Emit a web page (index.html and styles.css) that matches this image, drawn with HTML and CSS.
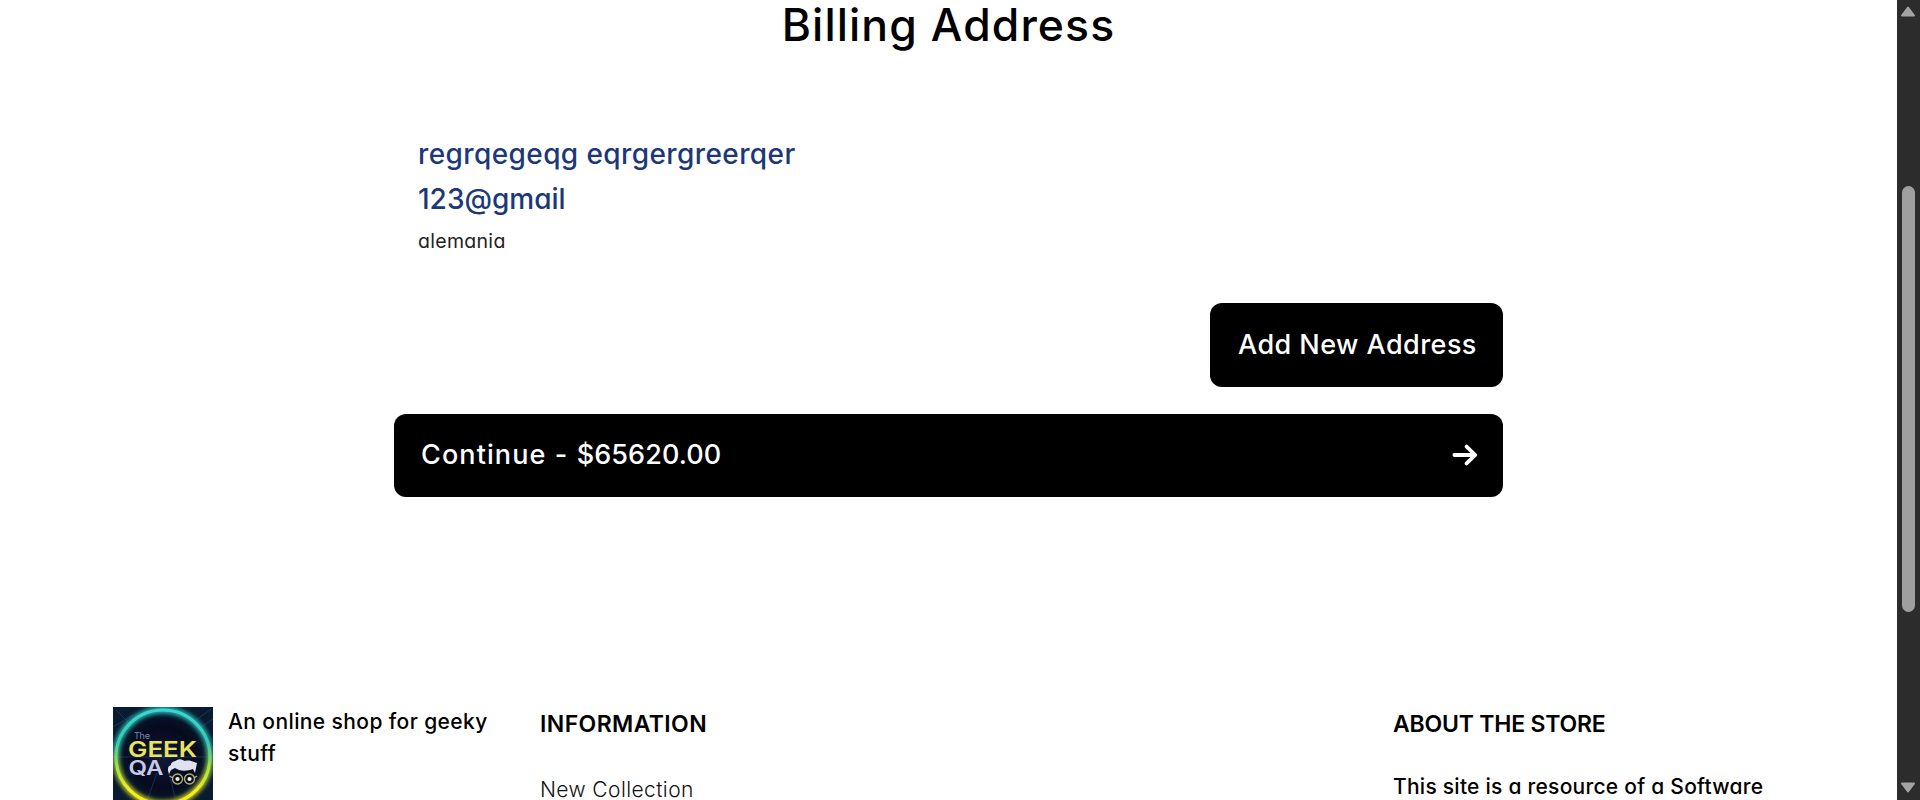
FILE: index.html
```
<!DOCTYPE html>
<html lang="en">
<head>
<meta charset="utf-8">
<title>Billing Address</title>
<link rel="stylesheet" href="styles.css">
</head>
<body>
<div class="page">
  <main class="checkout">
    <h1 class="title">Billing Address</h1>
    <section class="address">
      <p class="name">regrqegeqg eqrgergreerqer</p>
      <p class="email">123@gmail</p>
      <p class="country">alemania</p>
    </section>
    <button class="btn add">Add New Address</button>
    <button class="btn continue"><span>Continue - <span class="amount">$65620.00</span></span>
      <svg width="26" height="22" viewBox="0 0 26 22" fill="none" stroke="#fff" stroke-width="3.8" stroke-linecap="round" stroke-linejoin="round"><path d="M2.4 11H22.5M14.6 2.6L23.2 11L14.6 19.4"/></svg>
    </button>
  </main>
  <footer class="footer">
    <div class="brand">
      <svg class="logo" width="100" height="100" viewBox="0 0 100 100">
        <defs>
          <linearGradient id="ring" x1="0" y1="0" x2="0" y2="1"><stop offset="0" stop-color="#35d9d3"/><stop offset=".35" stop-color="#35c8b4"/><stop offset=".6" stop-color="#a5dc45"/><stop offset=".85" stop-color="#f0ee20"/><stop offset="1" stop-color="#f4ef1c"/></linearGradient>
          <radialGradient id="sky"><stop offset="0" stop-color="#101a3e"/><stop offset=".6" stop-color="#060a1d"/><stop offset="1" stop-color="#081b30"/></radialGradient>
          <filter id="glow" x="-20%" y="-20%" width="140%" height="140%"><feGaussianBlur stdDeviation="2"/></filter>
        </defs>
        <rect width="100" height="100" fill="url(#sky)"/>
        <path d="M0 20L20 8M3 3L16 16M82 14L98 2M88 20L100 12M0 50H100M34 94L44 66M62 90L56 66" stroke="#28508a" stroke-width=".8" opacity=".6"/>
        <circle cx="50" cy="50" r="47" fill="none" stroke="url(#ring)" stroke-width="7" opacity=".8" filter="url(#glow)"/>
        <circle cx="50" cy="50" r="47" fill="none" stroke="url(#ring)" stroke-width="3.2"/>
        <text class="logo-the" x="21" y="32" textLength="16">The</text>
        <text class="logo-geek" x="15" y="50" textLength="69" lengthAdjust="spacingAndGlyphs">GEEK</text>
        <text class="logo-qa" x="15.5" y="67.5" textLength="35" lengthAdjust="spacingAndGlyphs">QA</text>
        <path d="M56 67C54 62 55 59 58 58C58 54 62 55 64 53C67 51 70 53 72 54C75 53 79 54 81 55L84 56L83 61L82 66L80 62C75 64 70 64 66 63L62 61L58 63Z" fill="#e0e1ef"/>
        <g fill="none" stroke="#b4ac76" stroke-width="1.4"><circle cx="64.5" cy="72" r="5"/><circle cx="76.5" cy="72" r="5"/><path d="M56.5 69L60 71M81 71L84 69"/></g>
        <circle cx="64.5" cy="72" r="2.1" fill="#f2f3dc"/><circle cx="76.5" cy="72" r="2.1" fill="#f2f3dc"/>
      </svg>
      <p class="tagline">An online shop for geeky stuff</p>
    </div>
    <div class="col">
      <h2 class="heading">INFORMATION</h2>
      <a class="link">New Collection</a>
    </div>
    <div class="col about">
      <h2 class="heading tight">ABOUT THE STORE</h2>
      <p class="text">This site is a resource of a Software</p>
    </div>
  </footer>
</div>
<aside class="scrollbar">
  <svg width="16" height="11" viewBox="0 0 16 11"><path d="M8 1.5L14 9.5H2Z" fill="#a3a3a3" stroke="#a3a3a3" stroke-width="2" stroke-linejoin="round"/></svg>
  <div class="thumb"></div>
  <svg class="down" width="16" height="11" viewBox="0 0 16 11"><path d="M8 9.5L14 1.5H2Z" fill="#a3a3a3" stroke="#a3a3a3" stroke-width="2" stroke-linejoin="round"/></svg>
</aside>
</body>
</html>
```
FILE: styles.css
```
* { box-sizing: border-box; }
body {
  margin: 0;
  height: 800px;
  overflow: hidden;
  display: flex;
  background: #fff;
  color: #000;
  font-family: Inter, sans-serif;
  font-feature-settings: "cv11";
}
h1, h2, p { margin: 0; }
.page { width: 1897px; height: 800px; overflow: hidden; }
.checkout {
  width: 1109px;
  height: 706px;
  margin-left: 394px;
  display: flex;
  flex-direction: column;
}
.title {
  font-size: 44.5px;
  font-weight: 500;
  line-height: 50px;
  letter-spacing: 1.1px;
  text-align: center;
}
.address { padding: 82px 0 0 24px; height: 253px; }
.name, .email {
  font-size: 28px;
  font-weight: 500;
  line-height: 45px;
  color: #1c3879;
}
.name { letter-spacing: .4px; }
.country { font-size: 19.5px; line-height: 39px; letter-spacing: .3px; color: #222; }
.btn {
  border: 0;
  border-radius: 12px;
  background: #000;
  color: #fff;
  font: 500 27px/40px Inter, sans-serif;
  font-feature-settings: "cv11";
  display: flex;
  align-items: center;
  justify-content: space-between;
  white-space: nowrap;
}
.add {
  width: 293px;
  height: 84px;
  padding: 0 0 1px 28px;
  align-self: flex-end;
  letter-spacing: .45px;
}
.continue {
  margin-top: 27px;
  height: 83px;
  padding: 0 25px 2px 27px;
  letter-spacing: 1.1px;
}
.amount { letter-spacing: .1px; }
.footer { display: flex; padding: 1px 0 0 113px; }
.brand { display: flex; gap: 15px; width: 427px; }
.logo { display: block; flex: none; }
.logo-the { font: 9px Inter, sans-serif; fill: #7c86b5; }
.logo-geek { font: 600 22px Inter, sans-serif; fill: #e9e45c; }
.logo-qa { font: 600 20px Inter, sans-serif; fill: #c8c9e6; }
.tagline {
  width: 270px;
  margin-top: -1px;
  font-size: 21px;
  font-weight: 500;
  line-height: 32px;
  letter-spacing: .4px;
}
.col { width: 853px; }
.about { width: 400px; }
.heading {
  font-size: 23px;
  font-weight: 600;
  line-height: 35px;
  letter-spacing: .4px;
}
.tight { letter-spacing: -.2px; }
.link {
  display: block;
  margin-top: 32px;
  font-size: 21px;
  font-weight: 300;
  line-height: 32px;
  letter-spacing: .4px;
  color: #111;
}
.text {
  margin-top: 29px;
  font-size: 21px;
  font-weight: 500;
  line-height: 32px;
  letter-spacing: .25px;
  white-space: nowrap;
}
.scrollbar {
  width: 23px;
  height: 800px;
  padding: 6px 0 7px 3px;
  background: #2c2c2c;
  display: flex;
  flex-direction: column;
}
.thumb {
  width: 13px;
  height: 426px;
  margin: 169px 0 0 2px;
  border-radius: 7px;
  background: #9f9f9f;
}
.down { margin-top: auto; }
```
